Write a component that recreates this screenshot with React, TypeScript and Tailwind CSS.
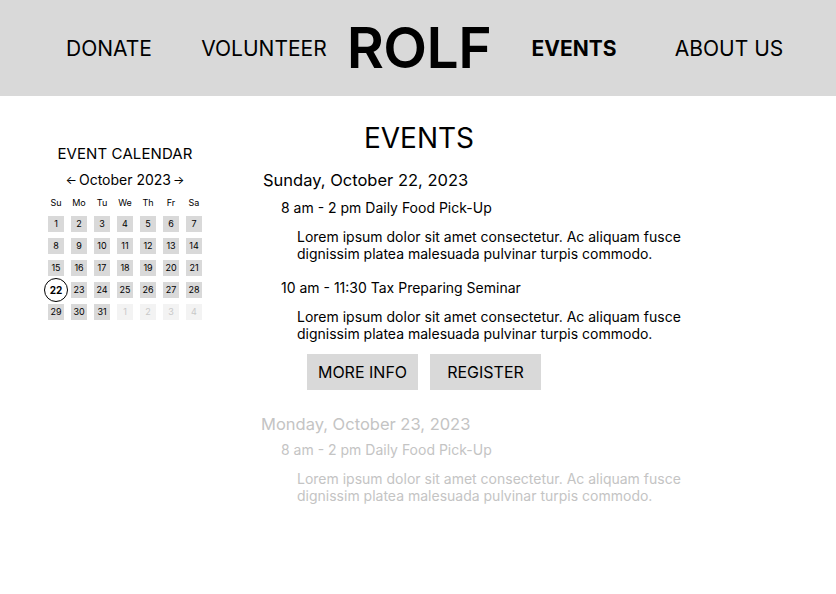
const days = ["Su", "Mo", "Tu", "We", "Th", "Fr", "Sa"];

const cells: { n: number; muted?: boolean }[] = [
  ...Array.from({ length: 31 }, (_, i) => ({ n: i + 1 })),
  ...[1, 2, 3, 4].map((n) => ({ n, muted: true })),
];

const lorem =
  "Lorem ipsum dolor sit amet consectetur. Ac aliquam fusce dignissim platea malesuada pulvinar turpis commodo.";

function Calendar() {
  return (
    <aside className="w-[250px] flex flex-col items-center pt-[49px]">
      <h2 className="text-[15px] leading-[18px] tracking-[0.1px]">EVENT CALENDAR</h2>
      <div className="mt-[8px] flex items-center gap-[2px] text-[14px] leading-[18px]">
        <span className="text-[12px]">←</span>
        <span>October 2023</span>
        <span className="text-[12px]">→</span>
      </div>
      <div className="mt-[6px] grid grid-cols-[repeat(7,16px)] gap-x-[7px] gap-y-[6px] text-[9px]">
        {days.map((d) => (
          <div key={d} className="h-[15px] flex items-center justify-center leading-none">
            {d}
          </div>
        ))}
        {cells.map((c, i) =>
          c.n === 22 && !c.muted ? (
            <div key={i} className="relative w-4 h-4 flex items-center justify-center">
              <div className="absolute w-[24px] h-[24px] rounded-full border border-black bg-white flex items-center justify-center text-[10px] font-bold">
                22
              </div>
            </div>
          ) : (
            <div
              key={i}
              className={
                c.muted
                  ? "w-4 h-4 flex items-center justify-center bg-[#f3f3f3] text-[#c8c8c8]"
                  : "w-4 h-4 flex items-center justify-center bg-[#d9d9d9]"
              }
            >
              {c.n}
            </div>
          )
        )}
      </div>
    </aside>
  );
}

function EventItem({ time }: { time: string }) {
  return (
    <div className="pl-[18px]">
      <p className="text-[14px] leading-[18px]">{time}</p>
      <p className="mt-[11px] pl-[16px] w-[410px] text-[14px] leading-[17px]">{lorem}</p>
    </div>
  );
}

export default function App() {
  return (
    <div className="min-h-[594px] bg-white text-black font-['Inter',sans-serif]">
      <header className="h-[96px] bg-[#d9d9d9] flex items-center justify-center">
        <nav className="w-[775px] ml-[2px] grid grid-cols-5 items-center text-center text-[21px] leading-none">
          <a>DONATE</a>
          <a>VOLUNTEER</a>
          <a className="text-[57px] font-semibold tracking-[-0.5px] mt-[-2px]">ROLF</a>
          <a className="font-bold">EVENTS</a>
          <a>ABOUT US</a>
        </nav>
      </header>
      <main className="flex">
        <Calendar />
        <section className="pl-[13px] pt-[25px]">
          <h1 className="w-[312px] text-center text-[28px] leading-[34px]">EVENTS</h1>
          <h3 className="mt-[14px] text-[16.5px] leading-[22px]">Sunday, October 22, 2023</h3>
          <div className="mt-[8px] flex flex-col gap-[17px]">
            <EventItem time="8 am - 2 pm Daily Food Pick-Up" />
            <EventItem time="10 am - 11:30 Tax Preparing Seminar" />
          </div>
          <div className="mt-[12px] ml-[44px] flex gap-[12px]">
            <button className="w-[111px] h-[36px] bg-[#d9d9d9] text-[16px]">MORE INFO</button>
            <button className="w-[111px] h-[36px] bg-[#d9d9d9] text-[16px]">REGISTER</button>
          </div>
          <div className="text-[#c4c4c4]">
            <h3 className="mt-[23px] ml-[-2px] text-[16.5px] leading-[22px]">Monday, October 23, 2023</h3>
            <div className="mt-[6px]">
              <EventItem time="8 am - 2 pm Daily Food Pick-Up" />
            </div>
          </div>
        </section>
      </main>
    </div>
  );
}
